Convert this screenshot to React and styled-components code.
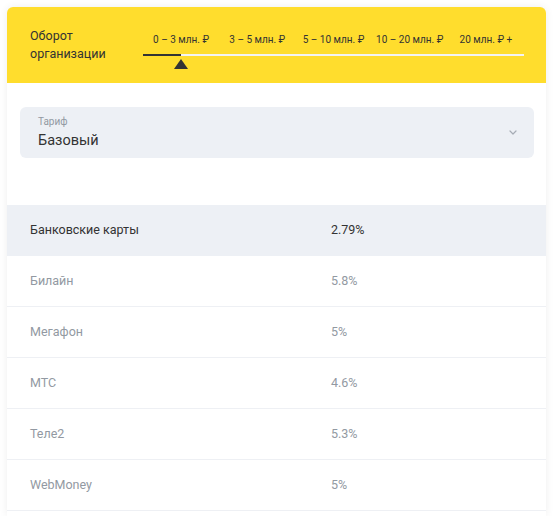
import React from 'react';
import styled, { createGlobalStyle } from 'styled-components';

// STYLES
const Global = createGlobalStyle`
    body {
        margin: 0;
        background: #ffffff;
        font-family: Roboto, "Liberation Sans", Arial, sans-serif;
        color: #333333;
    }
`

const Page = styled.div`
    padding: 7px 7px 0 7px;
`

const Card = styled.div`
    width: 539px;
    padding-bottom: 5px;
    background: #ffffff;
    border-radius: 6px 6px 0 0;
    box-shadow: 0 0 8px rgba(0, 0, 0, 0.07);
    overflow: hidden;
`

const Header = styled.div`
    height: 76px;
    background: #ffdd2d;
    display: flex;
    align-items: flex-start;
    padding: 0 22px 0 23px;
    box-sizing: border-box;
`

const Title = styled.div`
    width: 113px;
    padding-top: 20px;
    font-size: 12.5px;
    line-height: 18px;
    color: #333333;
`

const Slider = styled.div`
    width: 381px;
    padding-top: 26px;
    display: flex;
    flex-direction: column;
`

const Labels = styled.div`
    display: grid;
    grid-template-columns: repeat(5, 1fr);
    height: 14px;
`

const Label = styled.div`
    font-size: 10px;
    line-height: 14px;
    text-align: center;
    white-space: nowrap;
    color: #333333;
`

const Track = styled.div`
    position: relative;
    margin-top: 7px;
    height: 2px;
    background: #f3f3f3;
`

const Fill = styled.div`
    height: 2px;
    background: #333333;
`

const Thumb = styled.div`
    position: absolute;
    top: 5px;
    width: 0;
    height: 0;
    margin-left: -7px;
    border-left: 7px solid transparent;
    border-right: 7px solid transparent;
    border-bottom: 10px solid #333333;
`

const Body = styled.div`
    padding: 24px 12px 47px 13px;
`

const Select = styled.div`
    height: 51px;
    border-radius: 6px;
    background: #edf0f5;
    display: flex;
    align-items: center;
    justify-content: space-between;
    padding: 0 17px 0 18px;
    box-sizing: border-box;
`

const SelectText = styled.div`
    display: flex;
    flex-direction: column;
    gap: 4px;
    padding-top: 1px;
`

const SelectLabel = styled.div`
    font-size: 10px;
    line-height: 12px;
    color: #9299a2;
`

const SelectValue = styled.div`
    font-size: 14.5px;
    line-height: 18px;
    color: #333333;
`

const Row = styled.div`
    height: 51px;
    display: grid;
    grid-template-columns: 301px 1fr;
    align-items: center;
    padding-left: 23px;
    padding-bottom: 2px;
    box-sizing: border-box;
    font-size: 12.5px;
    color: ${p => (p.active ? '#333333' : '#9299a2')};
    background: ${p => (p.active ? '#edf0f5' : '#ffffff')};
    border-bottom: 1px solid ${p => (p.active ? '#edf0f5' : '#eef0f4')};
`

const ranges = ['0 – 3 млн. ₽', '3 – 5 млн. ₽', '5 – 10 млн. ₽', '10 – 20 млн. ₽', '20 млн. ₽ +'];

const rates = [
    ['Банковские карты', '2.79%'],
    ['Билайн', '5.8%'],
    ['Мегафон', '5%'],
    ['МТС', '4.6%'],
    ['Теле2', '5.3%'],
    ['WebMoney', '5%'],
];

const App = () => {
    const selected = 0;
    const pos = ((selected + 0.5) / ranges.length) * 100;

    return (
        <Page>
            <Global />
            <Card>
                <Header>
                    <Title>Оборот<br />организации</Title>
                    <Slider>
                        <Labels>
                            {ranges.map(r => <Label key={r}>{r}</Label>)}
                        </Labels>
                        <Track>
                            <Fill style={{ width: pos + '%' }} />
                            <Thumb style={{ left: pos + '%' }} />
                        </Track>
                    </Slider>
                </Header>

                <Body>
                    <Select>
                        <SelectText>
                            <SelectLabel>Тариф</SelectLabel>
                            <SelectValue>Базовый</SelectValue>
                        </SelectText>
                        <svg width="8" height="5" viewBox="0 0 8 5" fill="none">
                            <path d="M1 1l3 3 3-3" stroke="#a6acb5" strokeWidth="1.2" strokeLinecap="round" strokeLinejoin="round" />
                        </svg>
                    </Select>
                </Body>

                {rates.map(([name, rate], i) => (
                    <Row key={name} active={i === 0}>
                        <span>{name}</span>
                        <span>{rate}</span>
                    </Row>
                ))}
            </Card>
        </Page>
    );
};

export default App;
